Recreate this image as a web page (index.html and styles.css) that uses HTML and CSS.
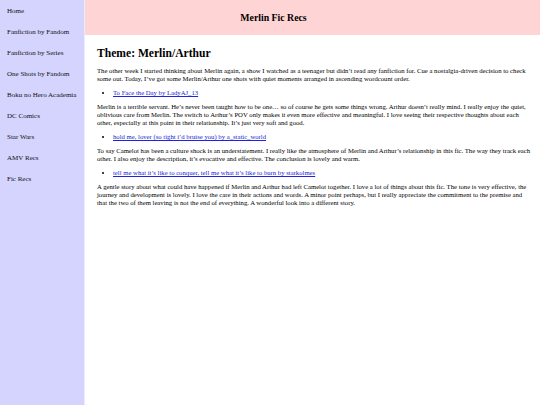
FILE: index.html
```html
<!DOCTYPE html>
<html lang="en">
<head>
<meta charset="utf-8">
<title>Merlin Fic Recs</title>
<link rel="stylesheet" href="styles.css">
</head>
<body>
<div class="page">
  <nav class="sidebar">
    <a class="nav-item" href="#">Home</a>
    <a class="nav-item" href="#">Fanfiction by Fandom</a>
    <a class="nav-item" href="#">Fanfiction by Series</a>
    <a class="nav-item" href="#">One Shots by Fandom</a>
    <a class="nav-item" href="#">Boku no Hero Academia</a>
    <a class="nav-item" href="#">DC Comics</a>
    <a class="nav-item" href="#">Star Wars</a>
    <a class="nav-item" href="#">AMV Recs</a>
    <a class="nav-item" href="#">Fic Recs</a>
  </nav>
  <div class="main">
    <header class="header">
      <h1 class="site-title">Merlin Fic Recs</h1>
    </header>
    <article class="content">
      <h2 class="theme">Theme: Merlin/Arthur</h2>
      <p>The other week I started thinking about Merlin again, a show I watched as a teenager but didn’t read any fanfiction for. Cue a nostalgia-driven decision to check some out. Today, I’ve got some Merlin/Arthur one shots with quiet moments arranged in ascending wordcount order.</p>
      <ul class="recs">
        <li><a href="#">To Face the Day by LadyAJ_13</a></li>
      </ul>
      <p>Merlin is a terrible servant. He’s never been taught how to be one… so of course he gets some things wrong. Arthur doesn’t really mind. I really enjoy the quiet, oblivious care from Merlin. The switch to Arthur’s POV only makes it even more effective and meaningful. I love seeing their respective thoughts about each other, especially at this point in their relationship. It’s just very soft and good.</p>
      <ul class="recs">
        <li><a href="#">hold me, lover (so tight i’d bruise you) by a_static_world</a></li>
      </ul>
      <p>To say Camelot has been a culture shock is an understatement. I really like the atmosphere of Merlin and Arthur’s relationship in this fic. The way they track each other. I also enjoy the description, it’s evocative and effective. The conclusion is lovely and warm.</p>
      <ul class="recs">
        <li><a href="#">tell me what it’s like to conquer, tell me what it’s like to burn by starkolmes</a></li>
      </ul>
      <p>A gentle story about what could have happened if Merlin and Arthur had left Camelot together. I love a lot of things about this fic. The tone is very effective, the journey and development is lovely. I love the care in their actions and words. A minor point perhaps, but I really appreciate the commitment to the premise and that the two of them leaving is not the end of everything. A wonderful look into a different story.</p>
    </article>
  </div>
</div>
</body>
</html>
```

FILE: styles.css
```css
html, body {
  margin: 0;
  padding: 0;
  height: 100%;
}

body {
  font-family: "Liberation Serif", "Times New Roman", serif;
  font-size: 6.7px;
  line-height: 8px;
  color: #000;
  background: #fff;
}

.page {
  display: flex;
  min-height: 405px;
}

.sidebar {
  width: 84px;
  flex: 0 0 84px;
  background: #d4d4ff;
  border-right: 1px solid #ebebff;
  display: flex;
  flex-direction: column;
  font-size: 7px;
}

.nav-item {
  display: block;
  padding: 6.55px 7px;
  color: #111;
  text-decoration: none;
  white-space: nowrap;
}

.main {
  flex: 1;
  display: flex;
  flex-direction: column;
}

.header {
  background: #ffd4d4;
  height: 35px;
  display: flex;
  align-items: center;
  justify-content: center;
  padding-right: 78px;
}

.site-title {
  margin: 0;
  font-size: 9.8px;
  font-weight: bold;
  line-height: 12px;
}

.content {
  padding: 12px 8px 0 12px;
}

.theme {
  margin: 0 0 6px;
  font-size: 11.6px;
  line-height: 14px;
  font-weight: bold;
}

.content p {
  margin: 6px 0;
}

.recs {
  margin: 6px 0;
  padding-left: 16px;
}

.recs a {
  color: #2222dd;
  text-decoration: underline;
}
```
